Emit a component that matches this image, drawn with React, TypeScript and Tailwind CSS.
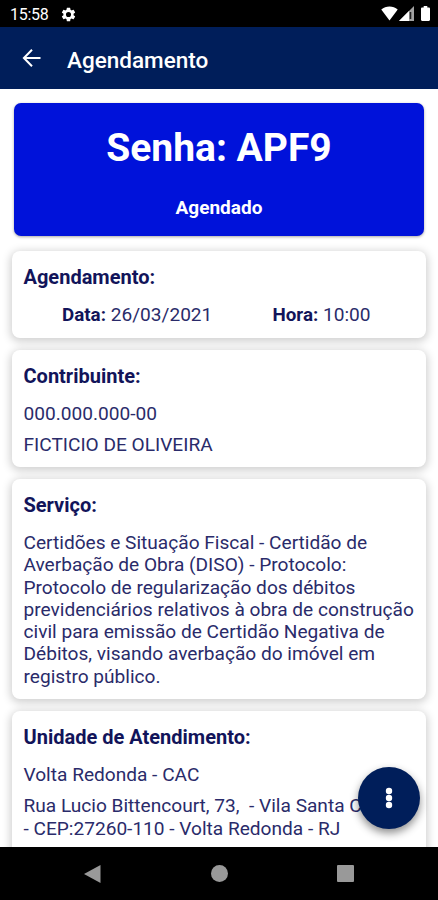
import type { ReactNode } from "react";

function StatusBar() {
    return (
        <div className="flex h-[27px] shrink-0 items-center bg-black pl-[10px] pr-[8px] text-white">
            <span className="text-[16px] leading-[27px] tracking-[-0.3px] pt-[2px]">15:58</span>
            <svg className="ml-[12px] mt-[1px]" width="17" height="17" viewBox="0 0 24 24" fill="currentColor">
                <path d="M19.14 12.94c.04-.3.06-.61.06-.94s-.02-.64-.07-.94l2.03-1.58a.5.5 0 0 0 .12-.61l-1.92-3.32a.49.49 0 0 0-.59-.22l-2.39.96a7 7 0 0 0-1.62-.94l-.36-2.54a.48.48 0 0 0-.48-.41h-3.84a.48.48 0 0 0-.47.41l-.36 2.54c-.59.24-1.13.57-1.62.94l-2.39-.96a.48.48 0 0 0-.59.22L2.74 8.87a.48.48 0 0 0 .12.61l2.03 1.58c-.05.3-.09.63-.09.94s.02.64.07.94l-2.03 1.58a.5.5 0 0 0-.12.61l1.92 3.32c.12.22.37.29.59.22l2.39-.96c.5.38 1.03.7 1.62.94l.36 2.54c.05.24.24.41.48.41h3.84c.24 0 .44-.17.47-.41l.36-2.54a7 7 0 0 0 1.62-.94l2.39.96c.22.08.47 0 .59-.22l1.92-3.32a.48.48 0 0 0-.12-.61zM12 15.6a3.6 3.6 0 1 1 0-7.2 3.6 3.6 0 0 1 0 7.2z" />
            </svg>
            <div className="ml-auto flex items-center">
                <svg width="17" height="15" viewBox="0 0 18 15" preserveAspectRatio="none" fill="currentColor">
                    <path d="M0.3 3.6C5-.4 13-.4 17.7 3.6L9 14.5z" />
                </svg>
                <svg className="ml-px" width="15" height="15" viewBox="0 0 15 15">
                    <path d="M15 0v15H0z" fill="#a3a3a3" />
                    <path d="M10 5v10H0z" fill="#fff" />
                    <path d="M11.5 6v7" stroke="#222" strokeWidth="1.6" />
                </svg>
                <svg className="ml-[7px]" width="9" height="15" viewBox="0 0 10 15" preserveAspectRatio="none" fill="currentColor">
                    <path d="M3 0h4v1.6h1.7c.7 0 1.3.5 1.3 1.2v11c0 .7-.6 1.2-1.3 1.2H1.3C.6 15 0 14.5 0 13.8v-11c0-.7.6-1.2 1.3-1.2H3z" />
                </svg>
            </div>
        </div>
    );
}

function Header() {
    return (
        <header className="flex h-[62px] shrink-0 items-center bg-[#001e5a] pl-[22px] text-white">
            <svg width="20" height="20" viewBox="0 0 20 20" fill="none" stroke="currentColor" strokeWidth="2">
                <path d="M18.5 10H2.5M10 1.8L1.9 10l8.1 8.2" />
            </svg>
            <h1 className="ml-[25px] pt-[5px] text-[22.5px] font-medium">Agendamento</h1>
        </header>
    );
}

function Card({ title, children }: { title: string; children: ReactNode }) {
    return (
        <section className="rounded-[8px] bg-white px-[11.5px] pt-[14px] shadow-[0_2px_9px_2px_rgba(0,0,0,0.18)]">
            <h2 className="text-[20px] font-bold leading-[24px]">{title}</h2>
            {children}
        </section>
    );
}

export default function App() {
    return (
        <div className="flex h-[900px] w-[438px] flex-col overflow-hidden bg-white font-[Roboto,sans-serif] text-[#12145a]">
            <StatusBar />
            <Header />
            <main className="relative flex-1 overflow-hidden px-[12px] pt-[14px]">
                <div className="mx-[2px] flex h-[133px] flex-col items-center rounded-[7px] bg-[#0012da] text-white shadow-[0_1px_3px_rgba(0,0,0,0.35)]">
                    <h2 className="mt-[21px] text-[39px] font-bold leading-[48px]">Senha: APF9</h2>
                    <p className="mt-[23px] text-[19px] font-bold leading-[26px]">Agendado</p>
                </div>
                <div className="mt-[15px] flex flex-col gap-[12px] text-[19.1px] leading-[22.3px]">
                    <Card title="Agendamento:">
                        <div className="mt-[15px] flex pb-[11.7px]">
                            <p className="flex-1 pl-[38.5px]"><b className="text-[18.8px] font-bold">Data:</b> <span className="text-[#2a2b6a]">26/03/2021</span></p>
                            <p className="w-[142px]"><b className="text-[18.8px] font-bold">Hora:</b> <span className="text-[#2a2b6a]">10:00</span></p>
                        </div>
                    </Card>
                    <Card title="Contribuinte:">
                        <div className="text-[#2a2b6a]">
                            <p className="mt-[15px]">000.000.000-00</p>
                            <p className="mt-[8.5px] pb-[10.9px]">FICTICIO DE OLIVEIRA</p>
                        </div>
                    </Card>
                    <Card title="Serviço:">
                        <p className="mt-[15px] pb-[11px] text-[#2a2b6a]">
                            Certidões e Situação Fiscal - Certidão de<br />
                            Averbação de Obra (DISO) - Protocolo:<br />
                            Protocolo de regularização dos débitos<br />
                            previdenciários relativos à obra de construção<br />
                            civil para emissão de Certidão Negativa de<br />
                            Débitos, visando averbação do imóvel em<br />
                            registro público.
                        </p>
                    </Card>
                    <Card title="Unidade de Atendimento:">
                        <div className="text-[#2a2b6a]">
                            <p className="mt-[15px]">Volta Redonda - CAC</p>
                            <p className="mt-[9px] whitespace-pre pb-[40px]">
                                {"Rua Lucio Bittencourt, 73,  - Vila Santa Cruz\n- CEP:27260-110 - Volta Redonda - RJ"}
                            </p>
                        </div>
                    </Card>
                </div>
                <button className="absolute bottom-[18px] right-[18px] flex h-[62px] w-[62px] items-center justify-center rounded-full bg-[#001e5a] shadow-[0_4px_8px_rgba(0,0,0,0.45)]">
                    <svg width="8" height="22" viewBox="0 0 8 22" fill="#fff">
                        <circle cx="4" cy="4" r="3.2" />
                        <circle cx="4" cy="11" r="3.2" />
                        <circle cx="4" cy="18" r="3.2" />
                    </svg>
                </button>
            </main>
            <nav className="flex h-[53px] shrink-0 justify-between bg-black pl-[84px] pr-[84px] pt-[18px] text-[#999]">
                <svg width="17" height="18" viewBox="0 0 17 18" fill="currentColor">
                    <path d="M16.5 0v18L0 9z" />
                </svg>
                <span className="h-[17px] w-[17px] rounded-full bg-current" />
                <span className="h-[17px] w-[17px] rounded-[1px] bg-current" />
            </nav>
        </div>
    );
}
